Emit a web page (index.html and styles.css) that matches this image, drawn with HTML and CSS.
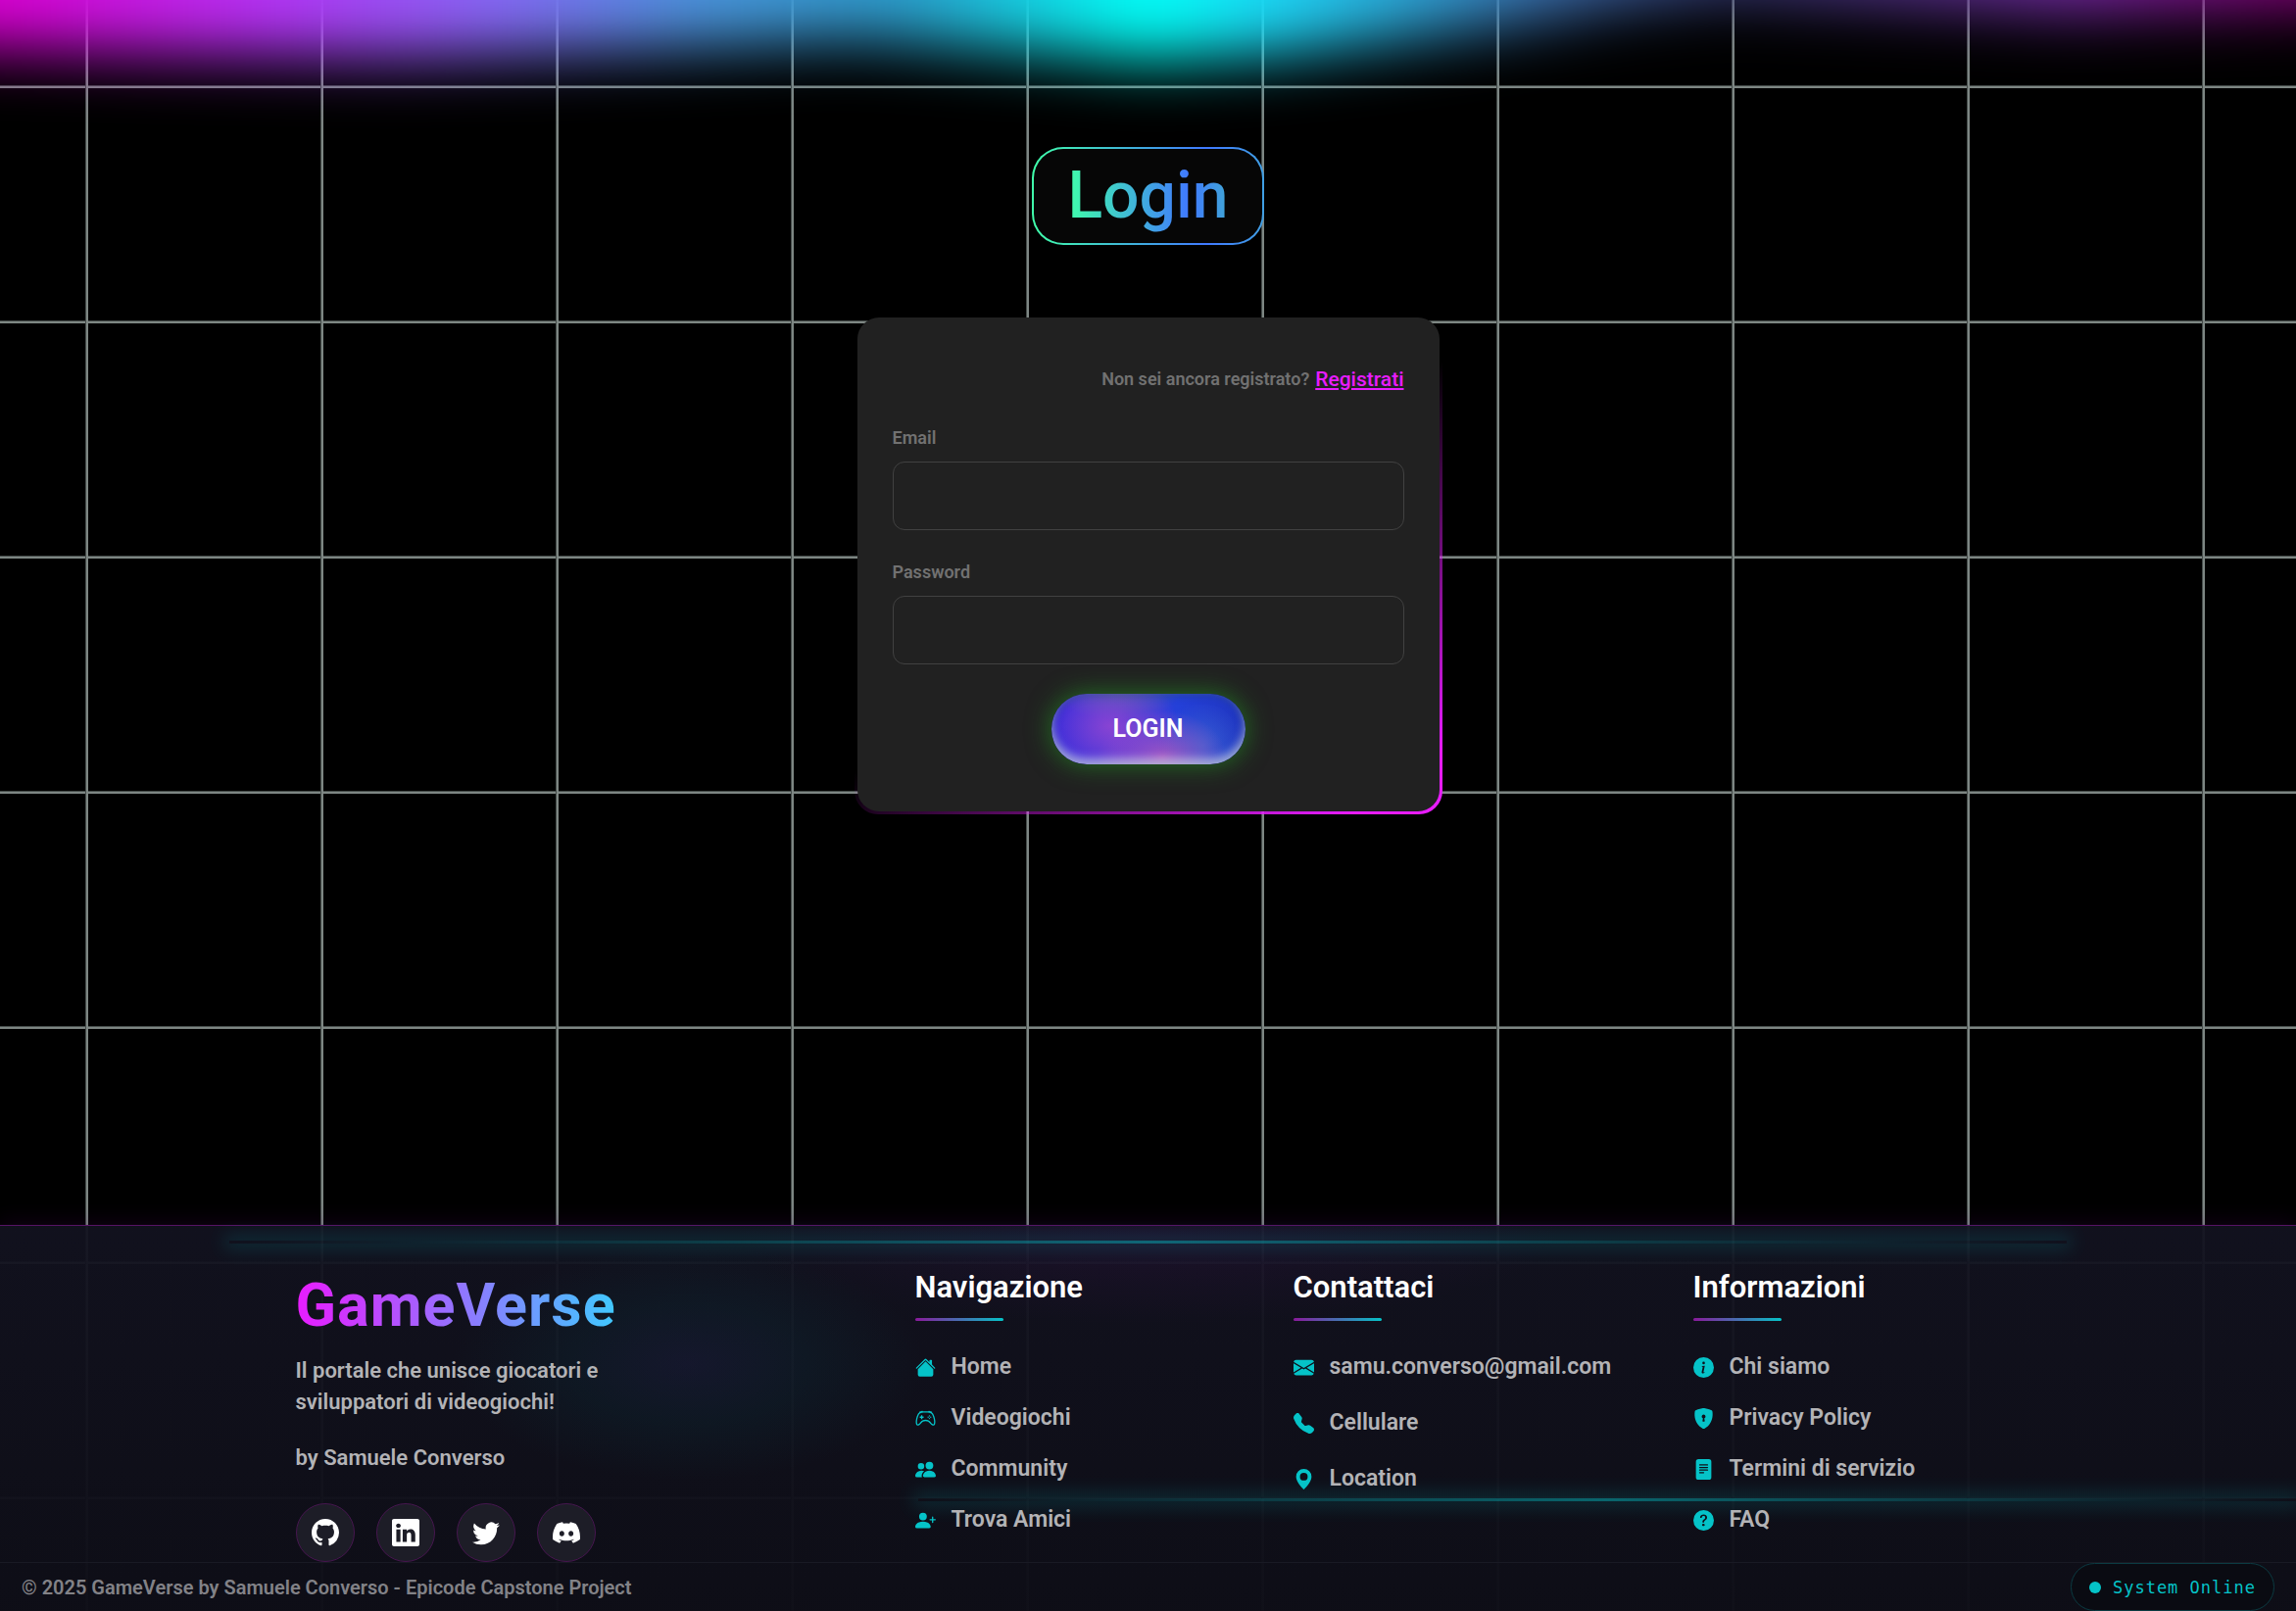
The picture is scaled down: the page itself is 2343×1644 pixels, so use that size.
FILE: index.html
```html
<!DOCTYPE html>
<html lang="it">
<head>
<meta charset="utf-8">
<meta name="viewport" content="width=device-width, initial-scale=1">
<title>GameVerse - Login</title>
<link rel="stylesheet" href="styles.css">
</head>
<body>
<div class="aurora" aria-hidden="true"><div class="aurora-band"></div></div>
<main class="main">
  <h1 class="title"><span class="title-text">Login</span></h1>
  <div class="card-shell">
    <form class="card">
      <p class="signup">Non sei ancora registrato? <a href="#registrati">Registrati</a></p>
      <div class="field">
        <label for="email">Email</label>
        <input id="email" type="email">
      </div>
      <div class="field">
        <label for="password">Password</label>
        <input id="password" type="password">
      </div>
      <button class="login-btn" type="submit">LOGIN</button>
    </form>
  </div>
</main>
<footer class="footer">
  <div class="beam beam-top" aria-hidden="true"></div>
  <div class="beam beam-bottom" aria-hidden="true"></div>
  <div class="columns">
    <section class="brand">
      <h2 class="logo">GameVerse</h2>
      <p class="tagline">Il portale che unisce giocatori e<br>sviluppatori di videogiochi!</p>
      <p class="author">by Samuele Converso</p>
      <div class="social">
        <a href="#github" aria-label="GitHub"><svg viewBox="0 0 16 16"><path d="M8 0C3.58 0 0 3.58 0 8c0 3.54 2.29 6.53 5.47 7.59.4.07.55-.17.55-.38 0-.19-.01-.82-.01-1.49-2.01.37-2.53-.49-2.69-.94-.09-.23-.48-.94-.82-1.13-.28-.15-.68-.52-.01-.53.63-.01 1.08.58 1.23.82.72 1.21 1.87.87 2.33.66.07-.52.28-.87.51-1.07-1.78-.2-3.64-.89-3.64-3.95 0-.87.31-1.59.82-2.15-.08-.2-.36-1.02.08-2.12 0 0 .67-.21 2.2.82.64-.18 1.32-.27 2-.27s1.36.09 2 .27c1.53-1.04 2.2-.82 2.2-.82.44 1.1.16 1.92.08 2.12.51.56.82 1.27.82 2.15 0 3.07-1.87 3.75-3.65 3.95.29.25.54.73.54 1.48 0 1.07-.01 1.93-.01 2.2 0 .21.15.46.55.38A8.01 8.01 0 0 0 16 8c0-4.42-3.58-8-8-8"/></svg></a>
        <a href="#linkedin" aria-label="LinkedIn"><svg viewBox="0 0 16 16"><path d="M0 1.146C0 .513.526 0 1.175 0h13.65C15.474 0 16 .513 16 1.146v13.708c0 .633-.526 1.146-1.175 1.146H1.175C.526 16 0 15.487 0 14.854zm4.943 12.248V6.169H2.542v7.225zm-1.2-8.212c.837 0 1.358-.554 1.358-1.248-.015-.709-.52-1.248-1.342-1.248S2.4 3.226 2.4 3.934c0 .694.521 1.248 1.327 1.248zm4.908 8.212V9.359c0-.216.016-.432.08-.586.173-.431.568-.878 1.232-.878.869 0 1.216.662 1.216 1.634v3.865h2.401V9.25c0-2.22-1.184-3.252-2.764-3.252-1.274 0-1.845.7-2.165 1.193v.025h-.016l.016-.025V6.169h-2.4c.03.678 0 7.225 0 7.225z"/></svg></a>
        <a href="#twitter" aria-label="Twitter"><svg viewBox="0 0 16 16"><path d="M5.026 15c6.038 0 9.341-5.003 9.341-9.334q.002-.211-.006-.422A6.7 6.7 0 0 0 16 3.542a6.7 6.7 0 0 1-1.889.518 3.3 3.3 0 0 0 1.447-1.817 6.5 6.5 0 0 1-2.087.793A3.286 3.286 0 0 0 7.875 6.03a9.32 9.32 0 0 1-6.767-3.429 3.29 3.29 0 0 0 1.018 4.382A3.3 3.3 0 0 1 .64 6.575v.045a3.29 3.29 0 0 0 2.632 3.218 3.2 3.2 0 0 1-.865.115 3 3 0 0 1-.614-.057 3.28 3.28 0 0 0 3.067 2.277A6.6 6.6 0 0 1 .78 13.58a6 6 0 0 1-.78-.045A9.34 9.34 0 0 0 5.026 15"/></svg></a>
        <a href="#discord" aria-label="Discord"><svg viewBox="0 0 16 16"><path d="M13.545 2.907a13.2 13.2 0 0 0-3.257-1.011.05.05 0 0 0-.052.025c-.141.25-.297.577-.406.833a12.2 12.2 0 0 0-3.658 0 8 8 0 0 0-.412-.833.05.05 0 0 0-.052-.025c-1.125.194-2.22.534-3.257 1.011a.04.04 0 0 0-.021.018C.356 6.024-.213 9.047.066 12.032q.003.022.021.037a13.3 13.3 0 0 0 3.995 2.02.05.05 0 0 0 .056-.019q.463-.63.818-1.329a.05.05 0 0 0-.01-.059l-.018-.011a9 9 0 0 1-1.248-.595.05.05 0 0 1-.02-.066l.015-.019q.127-.095.248-.195a.05.05 0 0 1 .051-.007c2.619 1.196 5.454 1.196 8.041 0a.05.05 0 0 1 .053.007q.121.1.248.195a.05.05 0 0 1-.004.085 8 8 0 0 1-1.249.594.05.05 0 0 0-.03.03.05.05 0 0 0 .003.041c.24.465.515.909.817 1.329a.05.05 0 0 0 .056.019 13.2 13.2 0 0 0 4.001-2.02.05.05 0 0 0 .021-.037c.334-3.451-.559-6.449-2.366-9.106a.03.03 0 0 0-.02-.019m-8.198 7.307c-.789 0-1.438-.724-1.438-1.612s.637-1.613 1.438-1.613c.807 0 1.45.73 1.438 1.613 0 .888-.637 1.612-1.438 1.612m5.316 0c-.788 0-1.438-.724-1.438-1.612s.637-1.613 1.438-1.613c.807 0 1.451.73 1.438 1.613 0 .888-.631 1.612-1.438 1.612"/></svg></a>
      </div>
    </section>
    <nav class="links">
      <h3>Navigazione</h3>
      <ul>
        <li><a href="#home"><svg viewBox="0 0 16 16"><path d="M8.707 1.5a1 1 0 0 0-1.414 0L.646 8.146a.5.5 0 0 0 .708.708L8 2.207l6.646 6.647a.5.5 0 0 0 .708-.708L13 5.793V2.5a.5.5 0 0 0-.5-.5h-1a.5.5 0 0 0-.5.5v1.293z"/><path d="m8 3.293 6 6V13.5a1.500 1.500 0 0 1-1.500 1.500h-9A1.500 1.500 0 0 1 2 13.500V9.293z"/></svg>Home</a></li>
        <li><a href="#videogiochi"><svg viewBox="0 0 16 16"><path d="M11.500 6.027a.5.5 0 1 1-1 0 .5.5 0 0 1 1 0m-1.500 1.500a.5.5 0 1 0 0-1 .5.5 0 0 0 0 1m2.500-.5a.5.5 0 1 1-1 0 .5.5 0 0 1 1 0m-1.500 1.500a.5.5 0 1 0 0-1 .5.5 0 0 0 0 1m-6.500-3h1v1h1v1h-1v1h-1v-1h-1v-1h1z"/><path d="M3.051 3.260a.5.5 0 0 1 .354-.613l1.932-.518a.5.5 0 0 1 .620.390c.655-.079 1.350-.117 2.043-.117.720 0 1.443.041 2.120.126a.5.5 0 0 1 .622-.399l1.932.518a.5.5 0 0 1 .306.729q.211.136.373.297c.408.408.780 1.050 1.095 1.772.320.733.599 1.591.805 2.466s.340 1.780.364 2.606c.024.816-.059 1.602-.328 2.210a1.420 1.420 0 0 1-1.445.830c-.636-.067-1.115-.394-1.513-.773-.245-.232-.496-.526-.739-.808-.126-.148-.250-.292-.368-.423-.728-.804-1.597-1.527-3.224-1.527s-2.496.723-3.224 1.527c-.119.131-.242.275-.368.423-.243.282-.494.575-.739.808-.398.380-.877.706-1.513.773a1.420 1.420 0 0 1-1.445-.830c-.269-.608-.352-1.395-.329-2.210.024-.826.160-1.730.365-2.606.206-.875.486-1.733.805-2.466.315-.722.687-1.364 1.094-1.772a2.300 2.300 0 0 1 .433-.335l-.028-.079zm2.036.412c-.877.185-1.469.443-1.733.708-.276.276-.587.783-.885 1.465a14 14 0 0 0-.748 2.295 12.400 12.400 0 0 0-.339 2.406c-.022.755.062 1.368.243 1.776a.420.420 0 0 0 .426.240c.327-.034.610-.199.929-.502.212-.202.400-.423.615-.674.133-.156.276-.323.440-.504C4.861 9.969 5.978 9.027 8 9.027s3.139.942 3.965 1.855c.164.181.307.348.440.504.214.251.403.472.615.674.318.303.601.468.929.503a.420.420 0 0 0 .426-.241c.180-.408.265-1.020.243-1.776a12.400 12.400 0 0 0-.339-2.406 14 14 0 0 0-.748-2.295c-.298-.682-.610-1.190-.885-1.465-.264-.265-.856-.523-1.733-.708-.850-.179-1.877-.270-2.913-.270s-2.063.091-2.913.270"/></svg>Videogiochi</a></li>
        <li><a href="#community"><svg viewBox="0 0 16 16"><path d="M7 14s-1 0-1-1 1-4 5-4 5 3 5 4-1 1-1 1zm4-6a3 3 0 1 0 0-6 3 3 0 0 0 0 6m-5.784 6A2.240 2.240 0 0 1 5 13c0-1.355.680-2.750 1.936-3.720A6.300 6.300 0 0 0 5 9c-4 0-5 3-5 4s1 1 1 1zM4.500 8a2.500 2.500 0 1 0 0-5 2.500 2.500 0 0 0 0 5"/></svg>Community</a></li>
        <li><a href="#amici"><svg viewBox="0 0 16 16"><path d="M1 14s-1 0-1-1 1-4 6-4 6 3 6 4-1 1-1 1zm5-6a3 3 0 1 0 0-6 3 3 0 0 0 0 6"/><path fill-rule="evenodd" d="M13.500 5a.5.5 0 0 1 .5.5V7h1.500a.5.5 0 0 1 0 1H14v1.500a.5.5 0 0 1-1 0V8h-1.500a.5.5 0 0 1 0-1H13V5.500a.5.5 0 0 1 .5-.5"/></svg>Trova Amici</a></li>
      </ul>
    </nav>
    <section class="links contacts">
      <h3>Contattaci</h3>
      <ul>
        <li><a href="mailto:samu.converso@gmail.com"><svg viewBox="0 0 16 16"><path d="M.05 3.555A2 2 0 0 1 2 2h12a2 2 0 0 1 1.950 1.555L8 8.414zM0 4.697v7.104l5.803-3.558zM6.761 8.830l-6.570 4.027A2 2 0 0 0 2 14h12a2 2 0 0 0 1.808-1.144l-6.570-4.027L8 9.586zm3.436-.586L16 11.801V4.697z"/></svg>samu.converso@gmail.com</a></li>
        <li><a href="#cellulare"><svg viewBox="0 0 16 16"><path d="M1.885.511a1.745 1.745 0 0 1 2.610.163L6.290 2.980c.329.423.445.974.315 1.494l-.547 2.190a.68.68 0 0 0 .178.643l2.457 2.457a.68.68 0 0 0 .644.178l2.189-.547a1.750 1.750 0 0 1 1.494.315l2.306 1.794c.829.645.905 1.870.163 2.611l-1.034 1.034c-.740.740-1.846 1.065-2.877.702a18.600 18.600 0 0 1-7.010-4.420 18.600 18.600 0 0 1-4.420-7.009c-.362-1.030-.037-2.137.703-2.877z"/></svg>Cellulare</a></li>
        <li><a href="#location"><svg viewBox="0 0 16 16"><path d="M8 16s6-5.686 6-10A6 6 0 0 0 2 6c0 4.314 6 10 6 10m0-7a3 3 0 1 1 0-6 3 3 0 0 1 0 6"/></svg>Location</a></li>
      </ul>
    </section>
    <nav class="links">
      <h3>Informazioni</h3>
      <ul>
        <li><a href="#chi-siamo"><svg viewBox="0 0 16 16"><path d="M8 16A8 8 0 1 0 8 0a8 8 0 0 0 0 16m.930-9.412-1 4.705c-.070.340.029.533.304.533.194 0 .487-.070.686-.246l-.088.416c-.287.346-.920.598-1.465.598-.703 0-1.002-.422-.808-1.319l.738-3.468c.064-.293.006-.399-.287-.470l-.451-.081.082-.381 2.290-.287zM8 5.500a1 1 0 1 1 0-2 1 1 0 0 1 0 2"/></svg>Chi siamo</a></li>
        <li><a href="#privacy"><svg viewBox="0 0 16 16"><path fill-rule="evenodd" d="M8 0c-.690 0-1.843.265-2.928.560-1.110.300-2.229.655-2.887.870a1.540 1.540 0 0 0-1.044 1.262c-.596 4.477.787 7.795 2.465 9.990a11.800 11.800 0 0 0 2.517 2.453c.386.273.744.482 1.048.625.280.132.581.240.829.240s.548-.108.829-.240a7 7 0 0 0 1.048-.625 11.800 11.800 0 0 0 2.517-2.453c1.678-2.195 3.061-5.513 2.465-9.990a1.540 1.540 0 0 0-1.044-1.263 63 63 0 0 0-2.887-.870C9.843.266 8.690 0 8 0m0 5a1.500 1.500 0 0 1 .5 2.915l.385 1.990a.5.5 0 0 1-.491.595h-.788a.5.5 0 0 1-.490-.595l.384-1.990A1.500 1.500 0 0 1 8 5"/></svg>Privacy Policy</a></li>
        <li><a href="#termini"><svg viewBox="0 0 16 16"><path d="M12 0H4a2 2 0 0 0-2 2v12a2 2 0 0 0 2 2h8a2 2 0 0 0 2-2V2a2 2 0 0 0-2-2M5 4h6a.5.5 0 0 1 0 1H5a.5.5 0 0 1 0-1m-.5 2.500A.5.5 0 0 1 5 6h6a.5.5 0 0 1 0 1H5a.5.5 0 0 1-.5-.5M5 8h6a.5.5 0 0 1 0 1H5a.5.5 0 0 1 0-1m0 2h3a.5.5 0 0 1 0 1H5a.5.5 0 0 1 0-1"/></svg>Termini di servizio</a></li>
        <li><a href="#faq"><svg viewBox="0 0 16 16"><path d="M16 8A8 8 0 1 1 0 8a8 8 0 0 1 16 0M5.496 6.033h.825c.138 0 .248-.113.266-.250.090-.656.540-1.134 1.342-1.134.686 0 1.314.343 1.314 1.168 0 .635-.374.927-.965 1.371-.673.489-1.206 1.060-1.168 1.987l.003.217a.25.25 0 0 0 .25.246h.811a.25.25 0 0 0 .25-.25v-.105c0-.718.273-.927 1.010-1.486.609-.463 1.244-.977 1.244-2.056 0-1.511-1.276-2.241-2.673-2.241-1.267 0-2.655.590-2.750 2.286a.237.237 0 0 0 .241.247m2.325 6.443c.610 0 1.029-.394 1.029-.927 0-.552-.420-.940-1.029-.940-.584 0-1.009.388-1.009.940 0 .533.425.927 1.010.927z"/></svg>FAQ</a></li>
      </ul>
    </nav>
  </div>
  <div class="bottom-bar">
    <p>© 2025 GameVerse by Samuele Converso - Epicode Capstone Project</p>
    <div class="status"><span class="dot"></span>System Online</div>
  </div>
</footer>
</body>
</html>
```
FILE: styles.css
```css
* { box-sizing: border-box; }

:root {
  --magenta: #e81cff;
  --cyan: #05c3c8;
  --line: #7d8683;
  --line-soft: #454c4a;
}

body {
  margin: 0;
  min-height: 100vh;
  display: flex;
  flex-direction: column;
  position: relative;
  overflow-x: hidden;
  color: #fff;
  font-family: Roboto, sans-serif;
  font-weight: 500;
  background-color: #000;
  background-image:
    linear-gradient(90deg, var(--line-soft) 1px, var(--line) 1px 3px, transparent 3px),
    linear-gradient(180deg, var(--line-soft) 1px, var(--line) 1px 3px, transparent 3px);
  background-size: 240px 240px;
  background-position: 87px 87px;
}

h1, h2, h3, p, ul { margin: 0; padding: 0; font-weight: inherit; }
ul { list-style: none; }
a { color: inherit; text-decoration: none; }
svg { display: block; fill: currentColor; }

/* Coloured light along the top edge */
.aurora {
  position: absolute;
  inset: 0 0 auto 0;
  height: 180px;
  overflow: hidden;
}
.aurora-band {
  position: absolute;
  inset: -120px -100px 0 -100px;
  filter: blur(31px);
}
.aurora-band::before {
  content: "";
  position: absolute;
  inset: 0;
  background: linear-gradient(90deg, #d800d0 4%, #b234f4 15%, #8468f4 24%, #4a94dc 32%, #2c9ccc 40%, #00fff6 50%, #1cd4f4 55%, #3a78b8 65%, #3c3c7c 74%, #7a2cac 87%, #8c0080 96%);
  clip-path: polygon(0 0, 100% 0, 100% 124px, 94% 128px, 87% 132px, 80% 124px, 73% 116px, 69% 126px, 65% 144px, 60% 162px, 55% 176px, 50% 182px, 45% 172px, 38% 160px, 30% 170px, 20% 178px, 10% 174px, 0 166px);
}

.main {
  flex: 1;
  display: flex;
  flex-direction: column;
  align-items: center;
  gap: 74px;
  padding: 150px 24px 100px;
  position: relative;
}

.title {
  padding: 0 34px;
  border: 2px solid transparent;
  border-radius: 32px;
  background:
    linear-gradient(#060606, #060606) padding-box,
    linear-gradient(90deg, #40ffaa, #4079ff 75%, #409fe3) border-box;
  font-size: 66px;
  line-height: 96px;
}
.title-text {
  background: linear-gradient(90deg, #40ffaa, #4079ff 75%, #40a6d6);
  -webkit-background-clip: text;
  background-clip: text;
  color: transparent;
}

.card-shell {
  width: 100%;
  max-width: 600px;
  padding: 0 3px 3px;
  border-radius: 24px;
  background: linear-gradient(145deg, transparent 50%, var(--magenta) 93%);
}
.card {
  display: flex;
  flex-direction: column;
  padding: 46px 36px 48px;
  border-radius: 22px;
  background: #212121;
}
.signup {
  display: flex;
  align-items: center;
  justify-content: flex-end;
  gap: 6px;
  font-size: 18px;
  line-height: 34px;
  font-weight: 600;
  color: #717171;
}
.signup a {
  font-size: 21px;
  font-weight: 500;
  color: var(--magenta);
  text-decoration: underline;
}
.field { display: flex; flex-direction: column; }
.field label {
  margin: 29px 0 10px;
  font-size: 18px;
  line-height: 28px;
  font-weight: 600;
  color: #717171;
}
.field input {
  height: 70px;
  padding: 0 18px;
  border: 1px solid #414141;
  border-radius: 12px;
  background: transparent;
  color: #fff;
  font: inherit;
}
.login-btn {
  align-self: center;
  width: 198px;
  height: 72px;
  padding: 0;
  margin-top: 30px;
  border: 0;
  border-radius: 36px;
  color: #fff;
  font: 600 25px/72px Roboto, sans-serif;
  background:
    radial-gradient(ellipse 70px 56px at 30% 46%, rgba(150, 70, 210, 0.85), transparent),
    radial-gradient(ellipse 66px 48px at 57% 90%, rgba(180, 90, 190, 0.85), transparent),
    radial-gradient(ellipse 64px 26px at 34% 0, rgba(70, 100, 170, 0.9), transparent),
    radial-gradient(ellipse 44px 44px at 78% 74%, rgba(60, 100, 210, 0.8), transparent),
    linear-gradient(90deg, #2c28dc, #3a38d8 35%, #2440d8 65%, #2036c0);
  box-shadow:
    inset 0 -6px 10px rgba(255, 255, 255, 0.55),
    inset 0 0 10px rgba(30, 60, 110, 0.7),
    0 0 26px rgba(36, 150, 36, 0.7);
}

.footer {
  position: relative;
  border-top: 1px solid #561464;
  background:
    radial-gradient(ellipse 240px 120px at 30% 140px, rgba(28, 34, 70, 0.4), rgba(12, 48, 60, 0.25) 50%, transparent),
    radial-gradient(ellipse 420px 90px at 50% 10px, rgba(60, 16, 80, 0.25), transparent),
    linear-gradient(180deg, rgba(18, 18, 31, 0.95), rgba(14, 14, 23, 0.98));
  box-shadow: 0 -4px 20px rgba(80, 10, 100, 0.2);
}
.beam {
  position: absolute;
  height: 3px;
  opacity: 0.4;
  background: linear-gradient(90deg, transparent, #00e5ea, transparent);
  box-shadow: 0 0 18px 5px rgba(0, 229, 234, 0.38);
}
.beam-top { top: 15px; left: 10%; width: 80%; }
.beam-bottom { top: 278px; left: 40%; width: 60%; }

.columns {
  position: relative;
  display: grid;
  grid-template-columns: 632fr 386fr 408fr 314fr;
  max-width: 1740px;
  margin: 0 auto;
  padding-top: 45px;
}
.brand {
  font-size: 22px;
  line-height: 32px;
  font-weight: 600;
  color: #b3b3b6;
}
.logo {
  width: max-content;
  margin-bottom: 15px;
  font-size: 61px;
  line-height: 72px;
  font-weight: 700;
  letter-spacing: 1px;
  background: linear-gradient(90deg, var(--magenta), #40c9ff);
  -webkit-background-clip: text;
  background-clip: text;
  color: transparent;
}
.tagline { margin-bottom: 25px; }
.author { margin-bottom: 30px; }
.social { display: flex; gap: 22px; }
.social a {
  width: 60px;
  height: 60px;
  display: grid;
  place-items: center;
  border: 1px solid #46164f;
  border-radius: 50%;
  background: #1d1d27;
  color: #fff;
}
.social svg { width: 28px; height: 28px; }

.links h3 {
  margin-bottom: 31px;
  font-size: 31px;
  line-height: 36px;
  font-weight: 600;
}
.links h3::after {
  content: "";
  display: block;
  width: 90px;
  height: 3px;
  margin-top: 13px;
  border-radius: 2px;
  background: linear-gradient(90deg, #8a1a9c, var(--cyan));
}
.links ul { display: grid; gap: 20px; }
.contacts ul { gap: 25px; }
.links a {
  display: flex;
  align-items: center;
  gap: 16px;
  font-size: 23px;
  line-height: 32px;
  font-weight: 600;
  color: #b3b3b6;
}
.links svg { width: 21px; height: 21px; color: var(--cyan); }

.bottom-bar {
  position: relative;
  display: flex;
  align-items: center;
  justify-content: space-between;
  padding: 0 22px;
  border-top: 1px solid #191a24;
  font-size: 20px;
  font-weight: 600;
  color: #828287;
}
.status {
  display: flex;
  align-items: center;
  gap: 12px;
  height: 49px;
  padding: 0 18px;
  border: 1px solid #0b3b42;
  border-radius: 25px;
  background: #0a0b12;
  color: var(--cyan);
  font: 17px "DejaVu Sans Mono", monospace;
  letter-spacing: 1px;
}
.dot { width: 12px; height: 12px; border-radius: 50%; background: var(--cyan); }
```
